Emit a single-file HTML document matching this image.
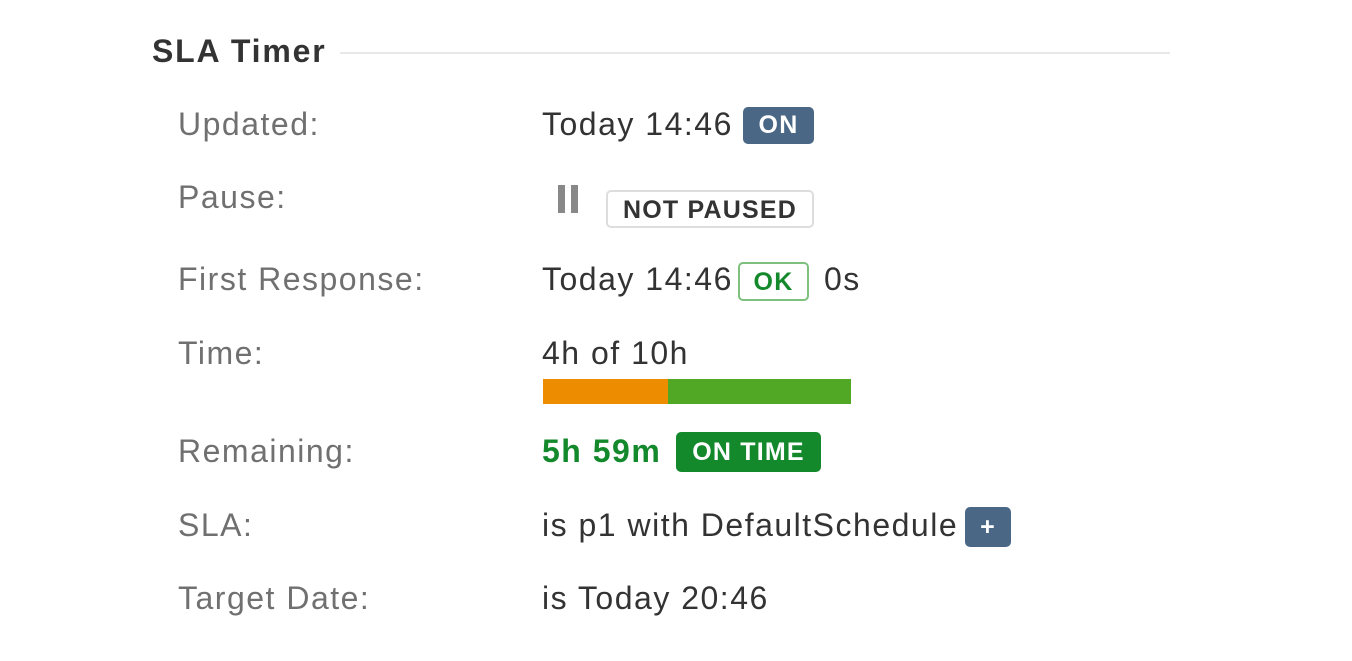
<!DOCTYPE html>
<html><head><style>
body{margin:0;width:1352px;height:661px;background:#fff;font-family:"Liberation Sans",sans-serif;position:relative;overflow:hidden;letter-spacing:1.5px}
.a{position:absolute;white-space:nowrap}
.l{left:178px;font-size:32px;color:#707070}
.v{left:542px;font-size:32px;color:#333}
.b{position:absolute;border-radius:5px;font-weight:bold;font-size:25px;text-align:center;box-sizing:border-box;letter-spacing:1.2px}
</style></head><body>
<div class="a" style="left:152px;top:33px;font-size:32px;font-weight:bold;color:#333;letter-spacing:1.8px">SLA Timer</div>
<div class="a" style="left:340px;top:52px;width:830px;height:2px;background:#e8e8e8"></div>

<div class="a l" style="top:106px">Updated:</div>
<div class="a v" style="top:106px">Today 14:46</div>
<div class="b" style="left:743px;top:107px;width:71px;height:37px;line-height:37px;background:#4a6785;color:#fff">ON</div>

<div class="a l" style="top:179px">Pause:</div>
<div class="a" style="left:558px;top:185px;width:7px;height:28px;background:#888"></div>
<div class="a" style="left:571px;top:185px;width:7px;height:28px;background:#888"></div>
<div class="b" style="left:606px;top:190px;width:208px;height:38px;line-height:36px;border:2px solid #ddd;color:#333">NOT PAUSED</div>

<div class="a l" style="top:261px">First Response:</div>
<div class="a v" style="top:261px">Today 14:46</div>
<div class="b" style="left:738px;top:262px;width:71px;height:39px;line-height:37px;border:2px solid #7ec07e;color:#14892c">OK</div>
<div class="a v" style="left:824px;top:261px">0s</div>

<div class="a l" style="top:335px">Time:</div>
<div class="a v" style="top:335px">4h of 10h</div>
<div class="a" style="left:543px;top:379px;width:125px;height:25px;background:#ee8c00"></div>
<div class="a" style="left:668px;top:379px;width:183px;height:25px;background:#51a825"></div>

<div class="a l" style="top:433px">Remaining:</div>
<div class="a" style="left:542px;top:433px;font-size:32px;font-weight:bold;color:#14892c">5h 59m</div>
<div class="b" style="left:676px;top:432px;width:145px;height:40px;line-height:40px;background:#14892c;color:#fff">ON TIME</div>

<div class="a l" style="top:507px">SLA:</div>
<div class="a v" style="top:507px">is p1 with DefaultSchedule</div>
<div class="b" style="left:965px;top:507px;width:46px;height:40px;line-height:40px;background:#4a6785;color:#fff">+</div>

<div class="a l" style="top:580px">Target Date:</div>
<div class="a v" style="top:580px">is Today 20:46</div>
</body></html>
